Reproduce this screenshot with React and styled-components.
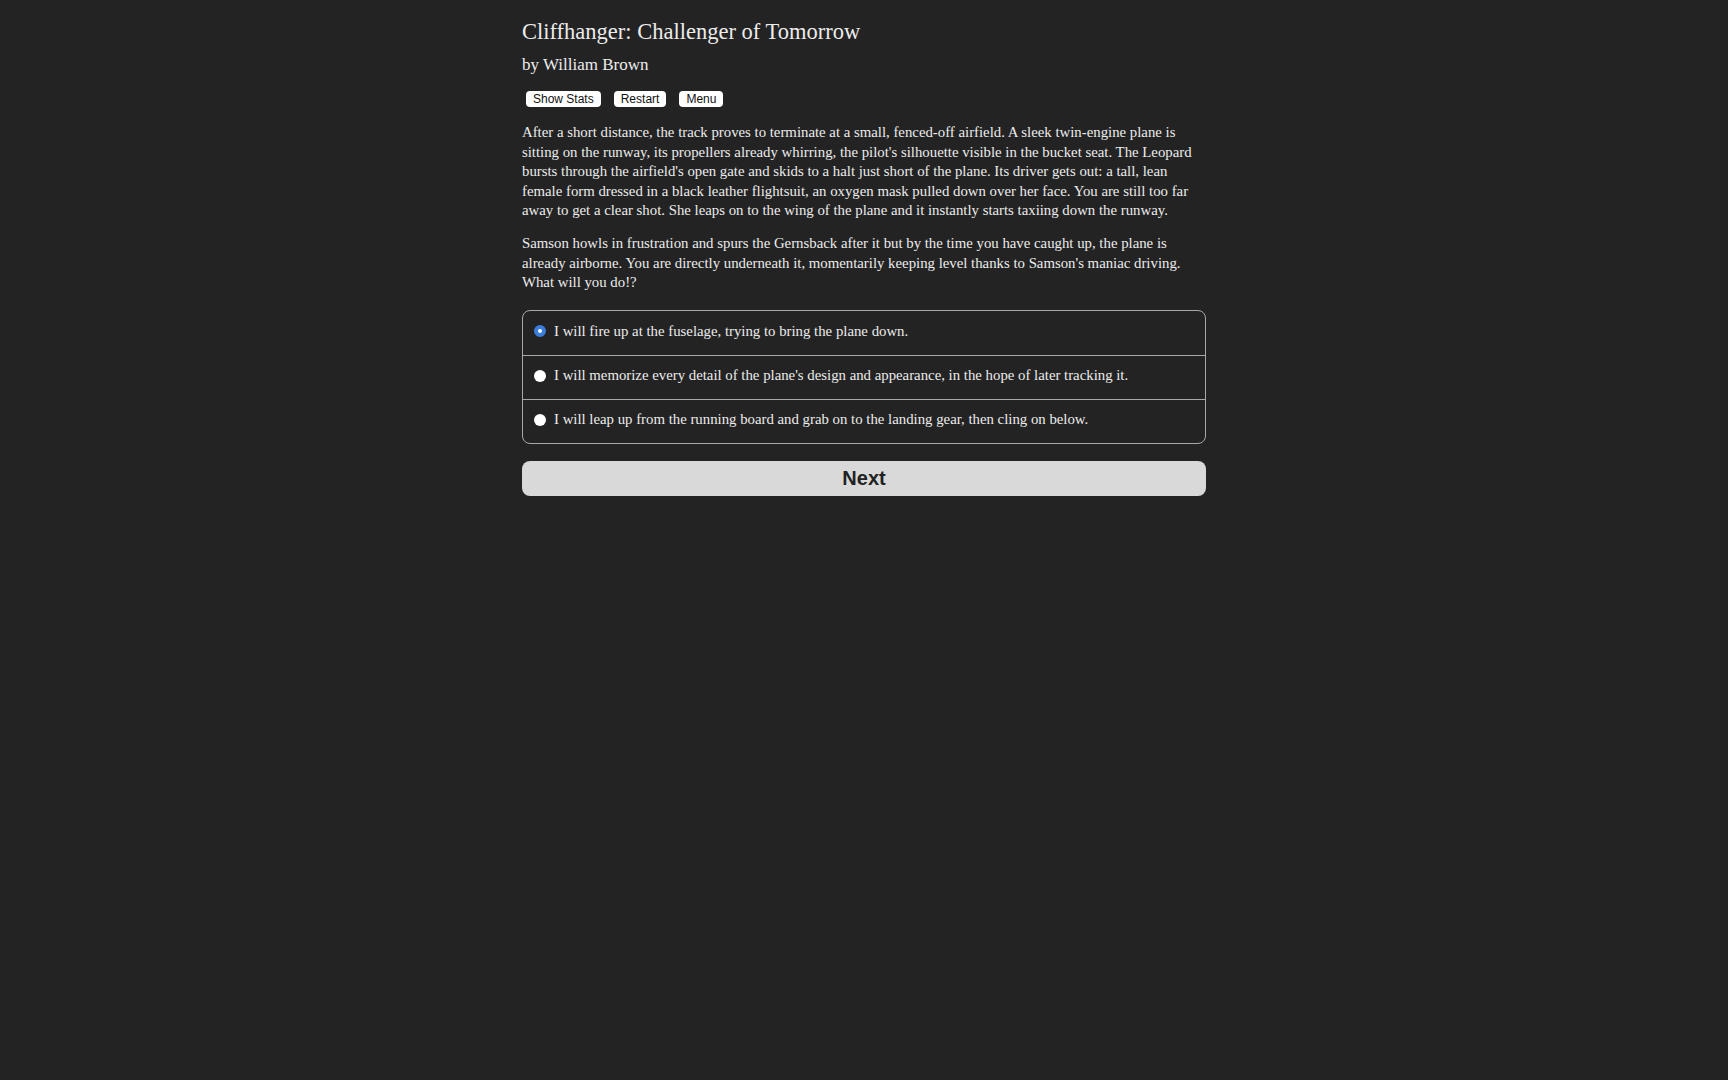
import React, { useState } from 'react'
import styled, { createGlobalStyle } from 'styled-components'

const GlobalStyle = createGlobalStyle`
    html, body {
        margin: 0;
        padding: 0;
        background: #232323;
    }
    body {
        font-family: "Liberation Serif", "DejaVu Serif", serif;
        color: #ececec;
    }
`

const Page = styled.div`
    width: 684px;
    margin: 0 auto;
    padding-top: 18px;
`

const Title = styled.h1`
    margin: 0;
    font-size: 22.5px;
    font-weight: normal;
    line-height: 28px;
`

const Author = styled.h2`
    margin: 8px 0 0;
    font-size: 17px;
    font-weight: normal;
    line-height: 22px;
`

const Buttons = styled.div`
    display: flex;
    gap: 13px;
    margin: 15px 0 0 4px;
`

const SmallButton = styled.button`
    height: 16px;
    padding: 0 7px;
    border: none;
    border-radius: 4px;
    background: #fff;
    color: #111;
    font-family: "Liberation Sans", Arial, sans-serif;
    font-size: 12px;
    line-height: 16px;
    cursor: pointer;
`

const Text = styled.div`
    margin-top: 16px;
    font-size: 14.8px;
    line-height: 19.6px;
`

const Para = styled.p`
    margin: 0 0 13px;
`

const Choices = styled.div`
    margin-top: 17px;
    border: 1px solid #a8a8a8;
    border-radius: 8px;
    overflow: hidden;
`

const Choice = styled.label`
    display: flex;
    align-items: center;
    gap: 8px;
    box-sizing: border-box;
    height: 44px;
    padding: 0 10px 3px 11px;
    font-size: 14.8px;
    cursor: pointer;
    & + & {
        border-top: 1px solid #a8a8a8;
    }
`

const Radio = styled.span`
    box-sizing: border-box;
    width: 12px;
    height: 12px;
    border-radius: 50%;
    flex-shrink: 0;
    background: #fff;
    border: ${p => (p.checked ? '4px solid #3b7ddd' : 'none')};
`

const NextButton = styled.button`
    display: block;
    width: 100%;
    height: 35px;
    margin-top: 17px;
    border: none;
    border-radius: 8px;
    background: #d9d9d9;
    color: #222;
    font-family: "Liberation Sans", Arial, sans-serif;
    font-weight: bold;
    font-size: 20px;
    cursor: pointer;
`

const options = [
    "I will fire up at the fuselage, trying to bring the plane down.",
    "I will memorize every detail of the plane's design and appearance, in the hope of later tracking it.",
    "I will leap up from the running board and grab on to the landing gear, then cling on below.",
]

export default function App() {
    const [picked, setPicked] = useState(0)

    return (
        <>
            <GlobalStyle />
            <Page>
                <Title>Cliffhanger: Challenger of Tomorrow</Title>
                <Author>by William Brown</Author>
                <Buttons>
                    <SmallButton>Show Stats</SmallButton>
                    <SmallButton>Restart</SmallButton>
                    <SmallButton>Menu</SmallButton>
                </Buttons>
                <Text>
                    <Para>
                        After a short distance, the track proves to terminate at a small, fenced-off airfield. A sleek twin-engine plane is sitting on the runway, its propellers already whirring, the pilot's silhouette visible in the bucket seat. The Leopard bursts through the airfield's open gate and skids to a halt just short of the plane. Its driver gets out: a tall, lean female form dressed in a black leather flightsuit, an oxygen mask pulled down over her face. You are still too far away to get a clear shot. She leaps on to the wing of the plane and it instantly starts taxiing down the runway.
                    </Para>
                    <Para>
                        Samson howls in frustration and spurs the Gernsback after it but by the time you have caught up, the plane is already airborne. You are directly underneath it, momentarily keeping level thanks to Samson's maniac driving. What will you do!?
                    </Para>
                </Text>
                <Choices>
                    {options.map((o, i) => (
                        <Choice key={i} onClick={() => setPicked(i)}>
                            <Radio checked={picked === i} />
                            {o}
                        </Choice>
                    ))}
                </Choices>
                <NextButton>Next</NextButton>
            </Page>
        </>
    )
}
